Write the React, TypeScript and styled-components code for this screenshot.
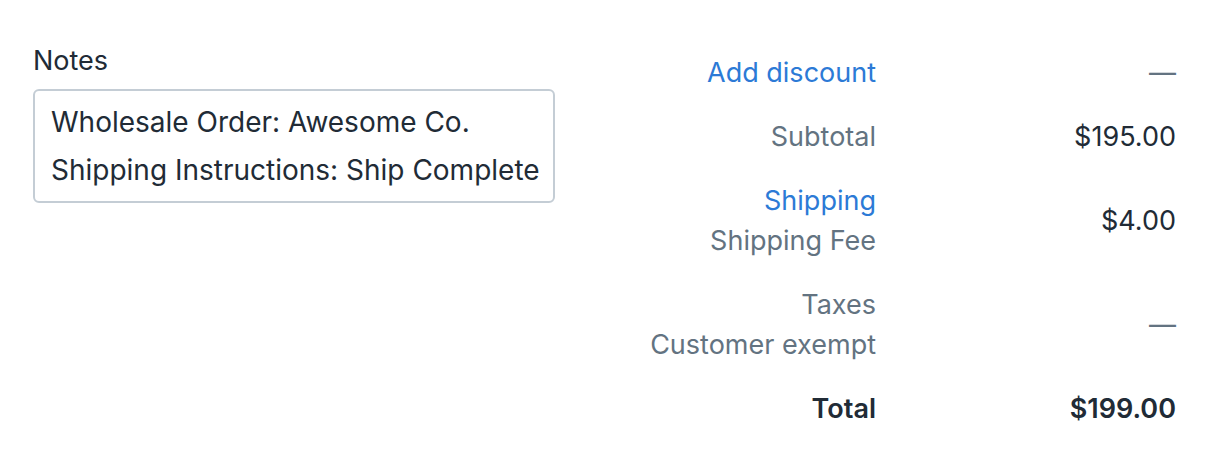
import React from 'react';
import styled, { createGlobalStyle } from 'styled-components';

const GlobalStyle = createGlobalStyle`
  html, body {
    margin: 0;
    padding: 0;
    background: #ffffff;
  }
  body {
    font-family: Inter, 'Noto Sans', 'Liberation Sans', sans-serif;
    color: #212b36;
    -webkit-font-smoothing: antialiased;
  }
`;

const Page = styled.div`
  display: grid;
  grid-template-columns: 522px 1fr;
  padding: 41px 46px 0 33px;
  width: 1222px;
  box-sizing: border-box;
`;

const NotesField = styled.div`
  display: flex;
  flex-direction: column;
  gap: 8px;
`;

const FieldLabel = styled.label`
  font-size: 27px;
  line-height: 40px;
  color: #212b36;
`;

const NotesBox = styled.div`
  border: 2px solid #c4cdd5;
  border-radius: 6px;
  padding: 7px 16px;
  font-size: 28px;
  line-height: 48px;
  color: #212b36;
  white-space: pre;
`;

const Summary = styled.div`
  display: grid;
  grid-template-columns: 1fr 300px;
  row-gap: 24px;
  padding-top: 12px;
  align-items: center;
`;

const Label = styled.div`
  display: flex;
  flex-direction: column;
  align-items: flex-end;
  font-size: 27px;
  line-height: 40px;
`;

const LabelLine = styled.span<{ $tone?: 'link' | 'subdued' | 'strong' }>`
  color: ${p => (p.$tone === 'link' ? '#2c7ad6' : p.$tone === 'strong' ? '#212b36' : '#637381')};
  font-weight: ${p => (p.$tone === 'strong' ? 600 : 400)};
`;

const Value = styled.div<{ $strong?: boolean; $empty?: boolean }>`
  text-align: right;
  font-size: 27px;
  line-height: 40px;
  color: ${p => (p.$empty ? '#637381' : '#212b36')};
  font-weight: ${p => (p.$strong ? 600 : 400)};
`;

type Line = { text: string; tone?: 'link' | 'subdued' | 'strong' };
type Row = { lines: Line[]; value: string; strong?: boolean };

const rows: Row[] = [
  { lines: [{ text: 'Add discount', tone: 'link' }], value: '—' },
  { lines: [{ text: 'Subtotal' }], value: '$195.00' },
  { lines: [{ text: 'Shipping', tone: 'link' }, { text: 'Shipping Fee' }], value: '$4.00' },
  { lines: [{ text: 'Taxes' }, { text: 'Customer exempt' }], value: '—' },
  { lines: [{ text: 'Total', tone: 'strong' }], value: '$199.00', strong: true },
];

export default function App() {
  return (
    <>
      <GlobalStyle />
      <Page>
        <NotesField>
          <FieldLabel>Notes</FieldLabel>
          <NotesBox>
            {'Wholesale Order: Awesome Co.\nShipping Instructions: Ship Complete'}
          </NotesBox>
        </NotesField>
        <Summary>
          {rows.map(r => (
            <React.Fragment key={r.lines[0].text}>
              <Label>
                {r.lines.map(l => (
                  <LabelLine key={l.text} $tone={l.tone}>
                    {l.text}
                  </LabelLine>
                ))}
              </Label>
              <Value $strong={r.strong} $empty={r.value === '—'}>
                {r.value}
              </Value>
            </React.Fragment>
          ))}
        </Summary>
      </Page>
    </>
  );
}
